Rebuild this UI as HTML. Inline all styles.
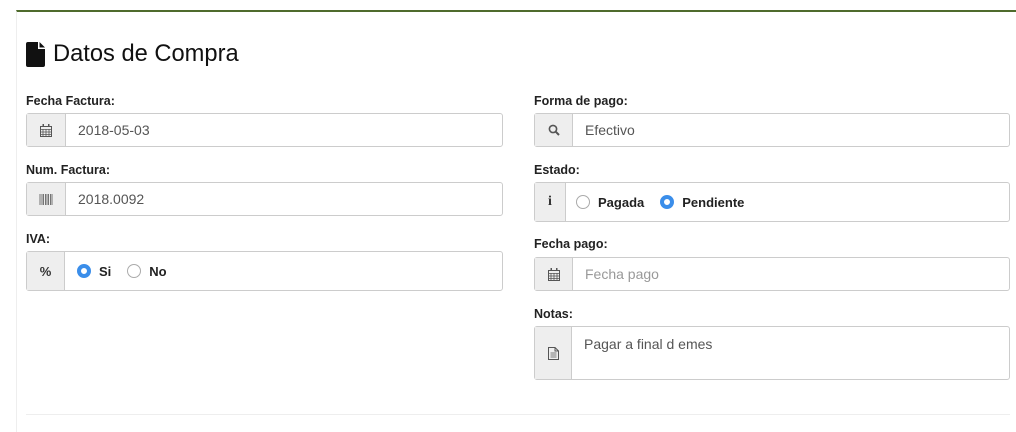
<!DOCTYPE html><html><head><style>
body{margin:0;width:1016px;height:424px;background:#fff;font-family:"Liberation Sans",sans-serif;position:relative;overflow:hidden}
.box{position:absolute;left:16px;top:10px;width:1000px;height:420px;border-top:2px solid #4f6b2d;border-left:1px solid #eee}
.a{position:absolute}
.lbl{position:absolute;font-size:12.5px;font-weight:bold;color:#222}
.ig{position:absolute;border:1px solid #ccc;border-radius:3px;display:flex;background:#fff;box-sizing:border-box}
.ad{background:#eee;border-right:1px solid #ccc;display:flex;align-items:center;justify-content:center;color:#555;font-size:12px}
.v{font-size:14px;color:#555;padding-left:12px;display:flex;align-items:center}
.r{display:inline-block;width:14px;height:14px;border-radius:50%;border:1px solid #aaa;box-sizing:border-box;vertical-align:middle;margin-right:8px;background:#fff}
.r.on{border:4px solid #3b8eea;background:#fff}
.rl{font-size:13px;font-weight:bold;color:#222;margin-right:16px;vertical-align:middle}
</style></head><body>
<div class="box"></div>
<svg class="a" style="left:26px;top:42px" width="20" height="25" viewBox="0 0 20 25"><path d="M2 0H12V7H19V23Q19 25 17 25H2Q0 25 0 23V2Q0 0 2 0Z" fill="#111"/><path d="M13.5 0L19 5.5V5.5H13.5Z" fill="#111"/></svg>
<div class="a" style="left:53px;top:41px;font-size:23.7px;color:#111">Datos de Compra</div>

<div class="lbl" style="left:26px;top:94px">Fecha Factura:</div>
<div class="ig" style="left:26px;top:113px;width:477px;height:34px"><div class="ad" style="width:38px"><svg width="12" height="13" viewBox="0 0 12 13"><rect x="0.5" y="2.5" width="11" height="10" fill="none" stroke="#555"/><path d="M0.5 5.5H11.5M0.5 8H11.5M0.5 10.5H11.5M3 5V12.5M6 5V12.5M9 5V12.5" stroke="#555" stroke-width="0.8"/><rect x="2.5" y="0" width="1.5" height="3" fill="#555"/><rect x="8" y="0" width="1.5" height="3" fill="#555"/></svg></div><div class="v">2018-05-03</div></div>
<div class="lbl" style="left:26px;top:163px">Num. Factura:</div>
<div class="ig" style="left:26px;top:182px;width:477px;height:34px"><div class="ad" style="width:38px"><svg width="14" height="11" viewBox="0 0 14 11"><path d="M1 0V11M3 0V11M4.5 0V11M6.5 0V11M8 0V11M9.5 0V11M11.5 0V11M13 0V11" stroke="#666" stroke-width="0.9"/></svg></div><div class="v">2018.0092</div></div>
<div class="lbl" style="left:26px;top:232px">IVA:</div>
<div class="ig" style="left:26px;top:251px;width:477px;height:40px"><div class="ad" style="width:37px;font-weight:bold;font-size:13px;color:#333">%</div><div class="v"><span class="r on"></span><span class="rl">Si</span><span class="r"></span><span class="rl">No</span></div></div>

<div class="lbl" style="left:534px;top:94px">Forma de pago:</div>
<div class="ig" style="left:534px;top:113px;width:476px;height:34px"><div class="ad" style="width:37px"><svg width="12" height="12" viewBox="0 0 12 12"><circle cx="5" cy="5" r="3.6" fill="none" stroke="#555" stroke-width="1.6"/><path d="M7.6 7.6L11 11" stroke="#555" stroke-width="2"/></svg></div><div class="v">Efectivo</div></div>
<div class="lbl" style="left:534px;top:163px">Estado:</div>
<div class="ig" style="left:534px;top:182px;width:476px;height:40px"><div class="ad" style="width:30px;font-weight:bold;font-size:14px;font-family:'Liberation Serif',serif;color:#333">i</div><div class="v" style="padding-left:10px"><span class="r"></span><span class="rl">Pagada</span><span class="r on"></span><span class="rl">Pendiente</span></div></div>
<div class="lbl" style="left:534px;top:237px">Fecha pago:</div>
<div class="ig" style="left:534px;top:257px;width:476px;height:34px"><div class="ad" style="width:37px"><svg width="12" height="13" viewBox="0 0 12 13"><rect x="0.5" y="2.5" width="11" height="10" fill="none" stroke="#555"/><path d="M0.5 5.5H11.5M0.5 8H11.5M0.5 10.5H11.5M3 5V12.5M6 5V12.5M9 5V12.5" stroke="#555" stroke-width="0.8"/><rect x="2.5" y="0" width="1.5" height="3" fill="#555"/><rect x="8" y="0" width="1.5" height="3" fill="#555"/></svg></div><div class="v" style="color:#999">Fecha pago</div></div>
<div class="lbl" style="left:534px;top:307px">Notas:</div>
<div class="ig" style="left:534px;top:326px;width:476px;height:54px"><div class="ad" style="width:36px"><svg width="11" height="13" viewBox="0 0 11 13"><path d="M0.5 0.5H7L10.5 4V12.5H0.5Z M7 0.5V4H10.5" fill="none" stroke="#555"/><path d="M2.5 6H8.5M2.5 8H8.5M2.5 10H8.5" stroke="#555" stroke-width="0.8"/></svg></div><div class="v" style="align-items:flex-start;padding-top:9px">Pagar a final d emes</div></div>
<div class="a" style="left:26px;top:414px;width:984px;border-top:1px solid #eee"></div>
</body></html>
